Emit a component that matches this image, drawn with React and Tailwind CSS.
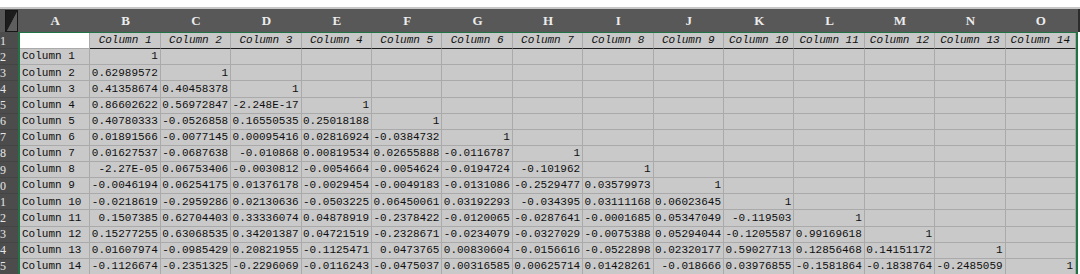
import React from "react";

const letters = ["A","B","C","D","E","F","G","H","I","J","K","L","M","N","O"];

const data = [
  ["1"],
  ["0.62989572","1"],
  ["0.41358674","0.40458378","1"],
  ["0.86602622","0.56972847","-2.248E-17","1"],
  ["0.40780333","-0.0526858","0.16550535","0.25018188","1"],
  ["0.01891566","-0.0077145","0.00095416","0.02816924","-0.0384732","1"],
  ["0.01627537","-0.0687638","-0.010868","0.00819534","0.02655888","-0.0116787","1"],
  ["-2.27E-05","0.06753406","-0.0030812","-0.0054664","-0.0054624","-0.0194724","-0.101962","1"],
  ["-0.0046194","0.06254175","0.01376178","-0.0029454","-0.0049183","-0.0131086","-0.2529477","0.03579973","1"],
  ["-0.0218619","-0.2959286","0.02130636","-0.0503225","0.06450061","0.03192293","-0.034395","0.03111168","0.06023645","1"],
  ["0.1507385","0.62704403","0.33336074","0.04878919","-0.2378422","-0.0120065","-0.0287641","-0.0001685","0.05347049","-0.119503","1"],
  ["0.15277255","0.63068535","0.34201387","0.04721519","-0.2328671","-0.0234079","-0.0327029","-0.0075388","0.05294044","-0.1205587","0.99169618","1"],
  ["0.01607974","-0.0985429","0.20821955","-0.1125471","0.0473765","0.00830604","-0.0156616","-0.0522898","0.02320177","0.59027713","0.12856468","0.14151172","1"],
  ["-0.1126674","-0.2351325","-0.2296069","-0.0116243","-0.0475037","0.00316585","0.00625714","0.01428261","-0.018666","0.03976855","-0.1581864","-0.1838764","-0.2485059","1"],
];

const mono = { fontFamily: '"Liberation Mono", "DejaVu Sans Mono", monospace' };

export default function App() {
  return (
    <div className="w-[1080px] h-[274px] overflow-hidden bg-white flex flex-col" style={mono}>
      <div className="h-[7px] bg-white shrink-0" />
      <div className="h-[2px] bg-[#c6c6c6] shrink-0" />
      {/* column header bar */}
      <div className="h-[23px] shrink-0 flex bg-[#585858]">
        <div className="w-[18px] flex items-end justify-end">
          <div className="w-[13px] h-[22px] border border-[#151515] bg-[#5e5e5e] overflow-hidden">
            <svg width="11" height="20" viewBox="0 0 11 20" className="block">
              <polygon points="0,0 11,0 11,1 1,20 0,20" fill="#1c1c1c" />
              <polygon points="11,1 11,20 1,20" fill="#5e5e5e" />
            </svg>
          </div>
        </div>
        <div className="w-[1060px] px-[2px] grid grid-cols-[repeat(15,minmax(0,1fr))]">
          {letters.map((l) => (
            <div
              key={l}
              className="flex items-center justify-center text-[13px] font-bold text-[#ececec]"
              style={{ fontFamily: '"Liberation Serif", "DejaVu Serif", serif' }}
            >
              {l}
            </div>
          ))}
        </div>
        <div className="flex-1 bg-[#2c2c2c]" />
      </div>
      {/* body */}
      <div className="flex flex-1 min-h-0">
        <div className="w-[18px] bg-[#4c4c4c] flex flex-col pt-[1px] overflow-hidden">
          {Array.from({ length: 15 }, (_, i) => (
            <div
              key={i}
              className="h-[16.14px] shrink-0 flex items-center justify-end pr-[12px] text-[12px] text-[#e6e6e6] whitespace-nowrap border-b border-[#444444]"
              style={{ fontFamily: '"Liberation Serif", "DejaVu Serif", serif' }}
            >
              {i + 1}
            </div>
          ))}
        </div>
        <div className="w-[1060px] border-x-2 border-t border-[#217346] flex flex-col overflow-hidden">
          {/* header row */}
          <div className="h-[16.14px] shrink-0 grid grid-cols-[repeat(15,minmax(0,1fr))]">
            <div className="bg-white border-r border-b border-[#aaaaaa]" />
            {Array.from({ length: 14 }, (_, i) => (
              <div
                key={i}
                className="bg-[#c9c9c9] border-r border-[#aaaaaa] border-b border-b-[#1e1e1e] flex items-center justify-center text-[11px] italic text-[#0f0f0f] whitespace-nowrap overflow-hidden"
              >
                Column {i + 1}
              </div>
            ))}
          </div>
          {data.map((row, r) => (
            <div key={r} className="h-[16.14px] shrink-0 grid grid-cols-[repeat(15,minmax(0,1fr))]">
              <div className="bg-[#c9c9c9] border-r border-b border-[#aaaaaa] flex items-center pl-[2px] text-[11px] text-[#0f0f0f] whitespace-nowrap overflow-hidden">
                Column {r + 1}
              </div>
              {Array.from({ length: 14 }, (_, c) => (
                <div
                  key={c}
                  className="bg-[#c9c9c9] border-r border-b border-[#aaaaaa] flex items-center justify-end pr-[2px] text-[11px] text-[#0f0f0f] whitespace-nowrap overflow-hidden"
                >
                  {row[c] ?? ""}
                </div>
              ))}
            </div>
          ))}
        </div>
        <div className="flex-1 bg-white" />
      </div>
    </div>
  );
}
